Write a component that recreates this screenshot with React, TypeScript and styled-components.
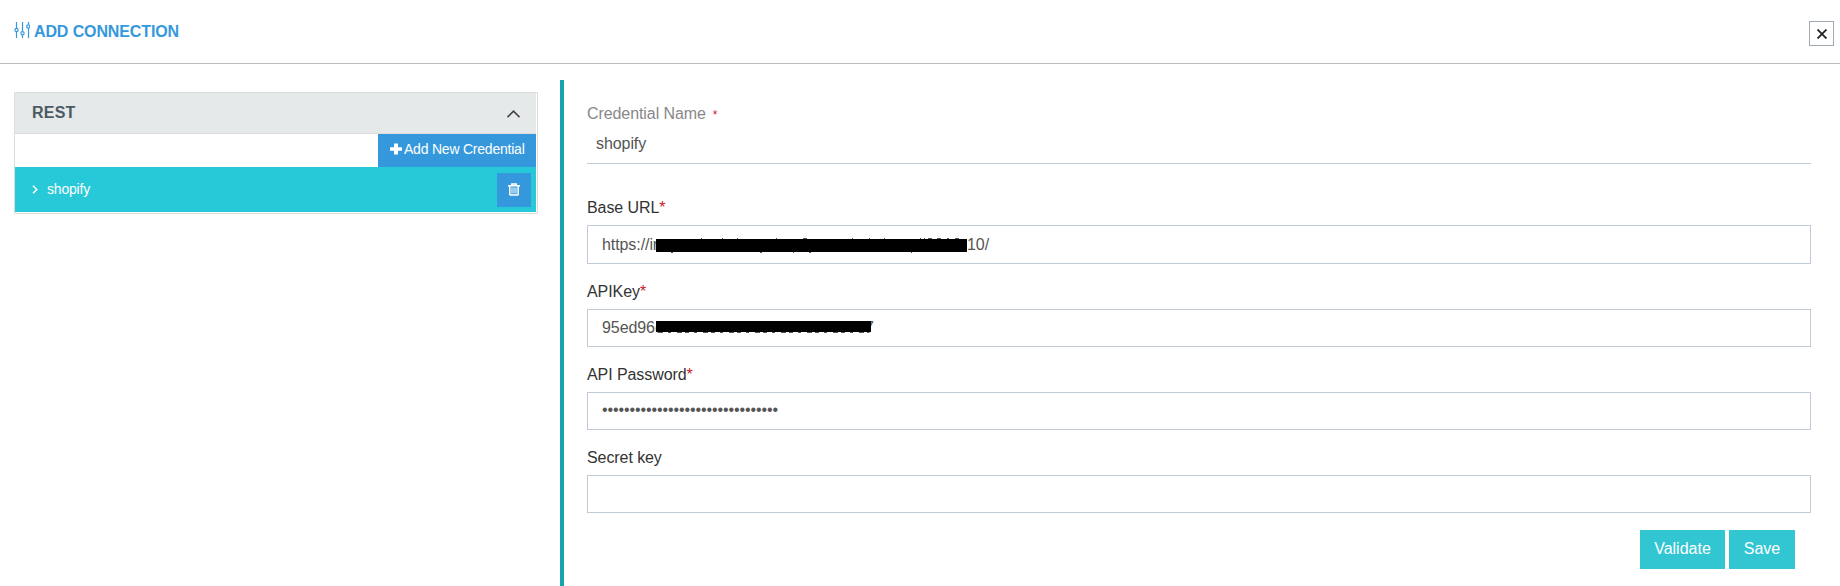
import React from "react";
import styled, { createGlobalStyle } from "styled-components";

const Global = createGlobalStyle`
  * { box-sizing: border-box; }
  body { margin: 0; background: #fff; font-family: "Liberation Sans", Arial, sans-serif; font-size: 16px; color: #333; }
  button { font-family: inherit; border: 0; border-radius: 0; padding: 0; margin: 0; }
`;

const Page = styled.div`
  height: 586px;
  overflow: hidden;
  display: flex;
  flex-direction: column;
`;

const Header = styled.header`
  height: 64px;
  flex: none;
  display: flex;
  justify-content: space-between;
  align-items: flex-start;
  padding: 21px 6px 0 14px;
  border-bottom: 1px solid #bbb;
`;

const Title = styled.h1`
  display: flex;
  gap: 4px;
  margin: 0;
  font-size: 16px;
  line-height: 22px;
  font-weight: bold;
  letter-spacing: -0.12px;
  color: #3598dc;
`;

const CloseButton = styled.button`
  width: 25px;
  height: 25px;
  display: grid;
  place-items: center;
  background: #fff;
  border: 1px solid #a0a9b4;
`;

const Body = styled.main`
  flex: 1;
  display: flex;
  align-items: stretch;
`;

const Sidebar = styled.aside`
  width: 560px;
  padding: 28px 22px 0 14px;
`;

const Panel = styled.section`
  border: 1px solid #ddd;
  height: 122px;
  padding-right: 1px;
`;

const PanelHeading = styled.div`
  height: 41px;
  display: flex;
  justify-content: space-between;
  padding: 0 16px 0 17px;
  background: #e5e9ea;
  border-bottom: 1px solid #ddd;
  font-weight: bold;
  letter-spacing: 0.2px;
  line-height: 39px;
  color: #4d5a62;
  svg { margin-top: 17px; }
`;

const AddRow = styled.div`
  height: 33px;
  display: flex;
  justify-content: flex-end;
`;

const AddButton = styled.button`
  width: 158px;
  display: flex;
  align-items: center;
  gap: 2px;
  padding: 0 0 3px 12px;
  background: #3598dc;
  color: #fff;
  font-size: 14px;
  letter-spacing: -0.22px;
  white-space: nowrap;
`;

const CredentialRow = styled.div`
  height: 45px;
  display: flex;
  align-items: center;
  padding: 0 5px 0 17px;
  background: #27c8d7;
  color: #fff;
  font-size: 14px;
`;

const CredentialName = styled.span`
  flex: 1;
  padding-left: 9px;
  line-height: 18px;
  letter-spacing: -0.2px;
  margin-top: -2px;
`;

const DeleteButton = styled.button`
  width: 34px;
  height: 34px;
  margin-top: 1px;
  padding-bottom: 2px;
  display: grid;
  place-items: center;
  background: #3598dc;
`;

const Form = styled.form`
  flex: 1;
  margin-top: 16px;
  border-left: 4px solid #17a2b0;
  padding: 24px 29px 0 23px;
  letter-spacing: -0.08px;
`;

const NameLabel = styled.label`
  display: block;
  line-height: 20px;
  color: #888;
`;

const Required = styled.span<{ $small?: boolean }>`
  color: #c8202a;
  font-size: ${(p) => (p.$small ? 12 : 16)}px;
  margin-left: ${(p) => (p.$small ? 7 : 0)}px;
  ${(p) => p.$small && "line-height: 1;"}
`;

const NameValue = styled.div`
  height: 40px;
  padding: 9px 9px 0;
  border-bottom: 1px solid #c2cad8;
  margin-bottom: 33px;
  line-height: 21px;
  color: #555;
`;

const Field = styled.div<{ $tall?: boolean }>`
  height: ${(p) => (p.$tall ? 84 : 83)}px;
  display: flex;
  flex-direction: column;
`;

const Label = styled.label`
  height: 28px;
  line-height: 22px;
  color: #333;
`;

const Box = styled.div<{ $tall?: boolean }>`
  height: ${(p) => (p.$tall ? 39 : 38)}px;
  display: flex;
  align-items: center;
  padding: 0 14px;
  border: 1px solid #c2cad8;
  color: #555;
  white-space: nowrap;
`;

const Prefix = styled.span`
  width: 54px;
`;

const Redaction = styled.span<{ $w: number; $h: number; $shift: number }>`
  width: ${(p) => p.$w}px;
  height: ${(p) => p.$h}px;
  margin-top: ${(p) => p.$shift}px;
  background: #000;
  z-index: 1;
  svg { display: block; overflow: visible; }
`;

const Tail = styled.span<{ $overlap?: number }>`
  margin-left: -${(p) => p.$overlap ?? 0}px;
`;

const Dots = styled.span`
  letter-spacing: -0.1px;
  padding-bottom: 2px;
`;

const Actions = styled.div`
  display: flex;
  justify-content: flex-end;
  gap: 4px;
  padding: 0 16px;
`;

const ActionButton = styled.button<{ $w: number }>`
  width: ${(p) => p.$w}px;
  height: 39px;
  padding-bottom: 2px;
  background: #32c5d2;
  color: #fff;
  font-size: 16px;
`;

const Sliders = () => (
  <svg width="16" height="18" viewBox="0 0 16 18" fill="none" stroke="#3598dc" strokeWidth="1.2">
    <path d="M2.500 1v6M2.500 10.500V17M8.500 1v9.500M8.500 14v3M14.500 1v2.500M14.500 7V17" />
    <circle cx="2.500" cy="9" r="1.600" />
    <circle cx="8.500" cy="12.200" r="1.600" />
    <circle cx="14.300" cy="5.500" r="1.600" />
  </svg>
);

const Trash = () => (
  <svg width="12" height="13" viewBox="0 0 12 13" fill="none" stroke="#fff">
    <path strokeWidth="1.500" d="M0 2.700h12M3.800 2.500V1h4.400v1.500M1.800 3v8.200q0 .8.8.8h6.800q.8 0 .8-.8V3" />
    <path strokeWidth="1" d="M4 4.500v6M6 4.500v6M8 4.500v6" />
  </svg>
);

export default function App() {
  return (
    <Page>
      <Global />
      <Header>
        <Title><Sliders />ADD CONNECTION</Title>
        <CloseButton type="button" aria-label="Close">
          <svg width="10" height="10" viewBox="0 0 10 10" stroke="#222" strokeWidth="1.800">
            <path d="M.5.5l9 9M9.500.5l-9 9" />
          </svg>
        </CloseButton>
      </Header>
      <Body>
        <Sidebar>
          <Panel>
            <PanelHeading>
              REST
              <svg width="13" height="8" viewBox="0 0 13 8" fill="none" stroke="#444" strokeWidth="1.600">
                <path d="M.5 7.200l6-6 6 6" />
              </svg>
            </PanelHeading>
            <AddRow>
              <AddButton type="button">
                <svg width="12" height="12" viewBox="0 0 12 12" fill="#fff">
                  <path d="M4 1q0-.5.5-.5h3q.5 0 .5.500V4.200h3.500q.5 0 .5.500v2.600q0 .5-.5.500H8V11q0 .5-.5.500h-3q-.5 0-.5-.5V7.800H.5q-.5 0-.5-.5V4.700q0-.5.500-.5H4z" />
                </svg>
                Add New Credential
              </AddButton>
            </AddRow>
            <CredentialRow>
              <svg width="6" height="9" viewBox="0 0 6 9" fill="none" stroke="#fff" strokeWidth="1.500">
                <path d="M1 .8l3.700 3.700L1 8.200" />
              </svg>
              <CredentialName>shopify</CredentialName>
              <DeleteButton type="button" aria-label="Delete"><Trash /></DeleteButton>
            </CredentialRow>
          </Panel>
        </Sidebar>
        <Form>
          <NameLabel>Credential Name<Required $small>*</Required></NameLabel>
          <NameValue>shopify</NameValue>
          <Field $tall>
            <Label>Base URL<Required>*</Required></Label>
            <Box $tall>
              <Prefix>https://in</Prefix>
              <Redaction $w={311} $h={13} $shift={2}>
                <svg width="311" height="13" stroke="#555">
                  <path d="M45-.5h1M66-.5h1M81-.5h1M120-.5h1M147-.5h4M196-.5h1M213-.5h1M228-.5h1M264-.5h1M268-.5h1M272-.5h4M281-.5h4M291-.5h2M299-.5h4M15 13.500h2M104 13.500h2M137 13.500h1M153 13.500h2M255 13.500h1" />
                </svg>
              </Redaction>
              <Tail>10/</Tail>
            </Box>
          </Field>
          <Field>
            <Label>APIKey<Required>*</Required></Label>
            <Box>
              <Prefix>95ed96c</Prefix>
              <Redaction $w={215} $h={11} $shift={-3}>
                <svg width="215" height="11" stroke="#555">
                  <path strokeDasharray="4 5 3 6 5 3" d="M3 11.500H212" />
                </svg>
              </Redaction>
              <Tail $overlap={6}>7</Tail>
            </Box>
          </Field>
          <Field>
            <Label>API Password<Required>*</Required></Label>
            <Box><Dots>{"•".repeat(32)}</Dots></Box>
          </Field>
          <Field>
            <Label>Secret key</Label>
            <Box />
          </Field>
          <Actions>
            <ActionButton type="button" $w={85}>Validate</ActionButton>
            <ActionButton type="button" $w={66}>Save</ActionButton>
          </Actions>
        </Form>
      </Body>
    </Page>
  );
}
